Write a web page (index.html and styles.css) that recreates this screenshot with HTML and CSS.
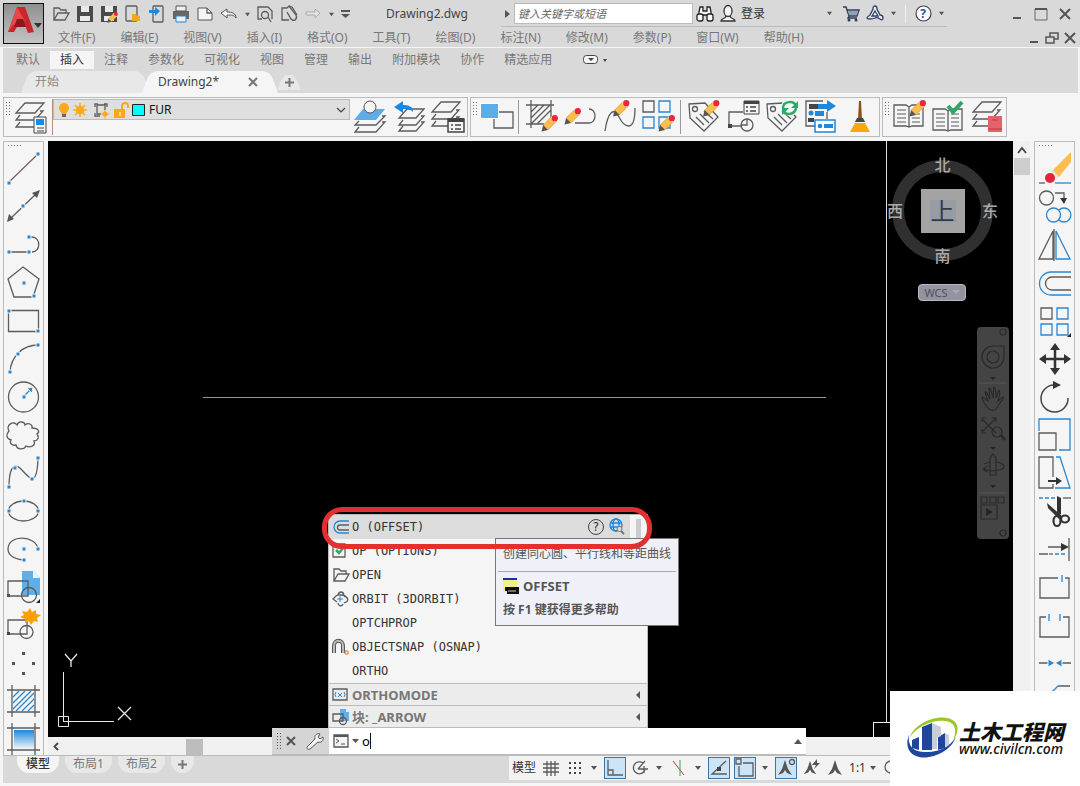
FILE: index.html
```html
<!DOCTYPE html>
<html lang="zh-CN">
<head>
<meta charset="utf-8">
<title>Drawing2.dwg</title>
<link rel="stylesheet" href="styles.css">
</head>
<body>
<svg class="sprite" aria-hidden="true">
  <symbol id="pencil" viewBox="0 0 16 16"><path d="M2 9.500 10 1.500l4.500 4.500-8 8z" fill="#fbbd4c" stroke="#c98a2a" stroke-width=".5"/><path d="M2 9.500l4.500 4.500L.5 15.500z" fill="#555"/><path d="M9 2.500l4.500 4.500 1-1L10 1.500z" fill="#dfe3ea"/><circle cx="13" cy="3" r="2.900" fill="#e8263c"/></symbol>
  <symbol id="layers" viewBox="0 0 34 34"><g class="g"><path d="M11 3h19l-9 10H2z"/><path d="M6 15l-4 5h19l8-9h-3M6 22l-4 5h19l8-9h-3"/></g></symbol>
  <symbol id="tag" viewBox="0 0 34 34"><g class="g"><path d="M2 4l16-1L31 17 17 31 3 18z"/><circle cx="8" cy="9" r="2.500"/><path d="M9 17l8 8M13 14l9 9M17 11l9 8"/></g></symbol>
  <symbol id="book" viewBox="0 0 34 34"><g class="g"><path d="M2 7h12l3 2 3-2h11v21H20l-3 1-3-1H2zM17 9v20"/><path d="M5 12h9M5 16h9M5 20h9M5 24h9M20 12h8M20 16h8M20 20h8M20 24h8" stroke-width="1"/></g></symbol>
  <symbol id="folder" viewBox="0 0 18 16"><path class="g" d="M2 14V2h5l2 2h5v3M2 14L6 7h11l-4 7z"/></symbol>
  <symbol id="caret" viewBox="0 0 8 6"><path d="M1 1h6L4 5z" fill="#555"/></symbol>
  <symbol id="block" viewBox="0 0 34 34"><path d="M15 1h11l7 7v17H15z" fill="#62aee8"/><path d="M26 1v7h7z" fill="#f5f5f5"/><g class="g"><path d="M1 11h20v15H1z"/><circle cx="22" cy="25" r="7.500"/></g><path d="M0 24h3v3H0z" fill="#555"/></symbol>
  <symbol id="compass" viewBox="0 0 18 18"><path d="M9 1l3 9 4 6-5-2-2-3-2 3-5 2 4-6z" fill="#555"/></symbol>
</svg>

<header class="header">
  <button class="app" aria-label="应用程序菜单"><svg width="41" height="40" viewBox="0 0 41 40"><path d="M5 28L14 3h8l9 25-6 1-3-8h-7l-4 7z" fill="#c9252d"/><path d="M14 3l8 14-12 4-5 7z" fill="#e5484b"/><path d="M14 15h6l3 8H11z" fill="#8e171d"/><path d="M31 19h8l-4 5z" fill="#333"/></svg></button>
  <div class="head-rows">
    <div class="title-row">
      <div class="quick">
        <button aria-label="打开"><svg width="18" height="16"><use href="#folder"/></svg></button>
        <button aria-label="保存"><svg width="18" height="18"><path d="M1 1h16v16H1z" fill="#4a4a4a"/><path d="M5 1h8v6H5zM4 11h10v5H4z" fill="#e9e9e9"/></svg></button>
        <button aria-label="另存为"><svg width="18" height="18"><path d="M1 1h16v16H1z" fill="#4a4a4a"/><path d="M5 1h8v6H5zM4 11h10v5H4z" fill="#e9e9e9"/><use href="#pencil" x="7" y="7" width="11" height="11"/></svg></button>
        <button aria-label="从移动设备打开"><svg width="18" height="18"><rect class="g" x="2" y="1" width="11" height="15" rx="1"/><path d="M8 16v-7h4l1 2h3v5z" fill="#f5a623"/></svg></button>
        <button aria-label="保存到移动设备"><svg width="18" height="18"><rect class="g" x="5" y="1" width="10" height="16" rx="1"/><path d="M1 5h6V2l5 4-5 5V8H1z" fill="#1e88dc"/></svg></button>
        <button aria-label="打印"><svg width="18" height="18"><path d="M1 6h16v8H1z" fill="#666"/><path d="M4 1h10v5H4z" fill="#eee" stroke="#555"/><path d="M4 11h10v6H4z" fill="#eee" stroke="#1e88dc"/></svg></button>
        <button aria-label="新建"><svg width="18" height="18"><path d="M2 3h9l5 5v7H2z" fill="#f5f5f5" stroke="#555"/><path class="g" d="M11 3v5h5"/></svg></button>
        <button aria-label="放弃"><svg width="18" height="18"><path d="M1 8l6-4v3c5 0 9 1 9 6-2-3-4-3-9-3v3z" fill="#f5f5f5" stroke="#555"/></svg></button>
        <button class="narrow" aria-label="放弃列表"><svg width="7" height="5"><use href="#caret"/></svg></button>
        <button aria-label="预览"><svg width="18" height="18"><path class="g" d="M6 14H2V2h10l4 4v8"/><circle class="g" cx="9" cy="10" r="3.500"/><path class="g" d="M12 12l3 5"/></svg></button>
        <button aria-label="批处理打印"><svg width="18" height="18"><path class="g" d="M9 15H2V3h5M7 3l2-2 7 9c2 4-2 7-5 4L7 7"/><path class="g" d="M9 1l3 1 5 8"/></svg></button>
        <button aria-label="重做"><svg width="18" height="18"><path d="M16 8l-5-4v3H2v3h9v3z" fill="#e4e4e4" stroke="#aaa"/></svg></button>
        <button class="narrow" aria-label="重做列表"><svg width="7" height="5"><use href="#caret"/></svg></button>
        <button class="more" aria-label="自定义"><svg width="9" height="9"><path d="M0 0h9v2H0zM0 4h9L4.500 8z" fill="#555"/></svg></button>
      </div>
      <h1 class="doc-title">Drawing2.dwg</h1>
      <div class="info">
        <svg class="tri" width="5" height="8"><path d="M0 0l5 4-5 4z" fill="#555"/></svg>
        <input class="search" type="text" placeholder="键入关键字或短语" aria-label="搜索">
        <button aria-label="查找"><svg width="18" height="18"><g fill="#f5f5f5" stroke="#222" stroke-width="1.300"><path d="M3 7l1-5h3v4h4V2h3l1 5v3H3z"/><rect x="1" y="9" width="6" height="7" rx="2"/><rect x="11" y="9" width="6" height="7" rx="2"/></g></svg></button>
        <button class="login"><svg width="18" height="18"><g fill="#f5f5f5" stroke="#333" stroke-width="1.300"><path d="M2 16c0-3 5-2 5-5h4c0 3 5 2 5 5z"/><ellipse cx="9" cy="6" rx="4" ry="5.500"/></g></svg>登录</button>
        <button class="login-more" aria-label="登录菜单"><svg width="7" height="5"><use href="#caret"/></svg></button>
        <button aria-label="购物车"><svg width="18" height="18"><path d="M1 2h3l3 9h8l2-6H5M7 11l-1 2h9" fill="none" stroke="#2d3f55" stroke-width="1.400"/><path d="M6 6h10l-1 4H7z" fill="#8fa0b4"/><circle cx="7" cy="15" r="1.500" fill="#2d3f55"/><circle cx="14" cy="15" r="1.500" fill="#2d3f55"/></svg></button>
        <button aria-label="应用商店"><svg width="18" height="18"><path d="M9 1q2 0 2 3l3 6q3 0 3 3t-3 1-5-1-5 1-3-1 3-3l3-6q0-3 2-3z" fill="#e8edf5" stroke="#2d3f65" stroke-width="1.300"/><path d="M9 6l3 5H6z" fill="#fff" stroke="#2d3f65" stroke-width="1.300"/></svg></button>
        <button class="narrow" aria-label="应用菜单"><svg width="7" height="5"><use href="#caret"/></svg></button>
        <button class="help" aria-label="帮助"><svg width="17" height="17"><circle cx="8.500" cy="8.500" r="7.500" fill="#fff" stroke="#444" stroke-width="1.200"/></svg><span>?</span></button>
        <button class="narrow" aria-label="帮助菜单"><svg width="7" height="5"><use href="#caret"/></svg></button>
      </div>
      <div class="window">
        <button aria-label="最小化"><svg width="14" height="14"><path d="M3 11h8" stroke="#555" stroke-width="2"/></svg></button>
        <button aria-label="最大化"><svg width="14" height="14"><path d="M1 2h12v11H1z" fill="none" stroke="#666"/><path d="M1 2h12" stroke="#555" stroke-width="2"/></svg></button>
        <button aria-label="关闭"><svg width="14" height="14"><path d="M2 2l10 10M12 2L2 12" stroke="#555" stroke-width="2"/></svg></button>
      </div>
    </div>
    <nav class="menu-row">
      <a href="#">文件(F)</a><a href="#">编辑(E)</a><a href="#">视图(V)</a><a href="#">插入(I)</a><a href="#">格式(O)</a><a href="#">工具(T)</a><a href="#">绘图(D)</a><a href="#">标注(N)</a><a href="#">修改(M)</a><a href="#">参数(P)</a><a href="#">窗口(W)</a><a href="#">帮助(H)</a>
      <div class="doc-window">
        <button aria-label="最小化图形"><svg width="12" height="12"><path d="M2 10h8" stroke="#555" stroke-width="2"/></svg></button>
        <button aria-label="还原图形"><svg width="14" height="12"><path d="M1 5h8v6H1zM5 5V1h8v6H9" fill="none" stroke="#555" stroke-width="1.500"/></svg></button>
        <button aria-label="关闭图形"><svg width="12" height="12"><path d="M1 1l10 10M11 1L1 11" stroke="#555" stroke-width="2"/></svg></button>
      </div>
    </nav>
  </div>
</header>

<section class="ribbon">
  <nav class="ribbon-tabs">
    <a href="#">默认</a><a href="#" class="on">插入</a><a href="#">注释</a><a href="#">参数化</a><a href="#">可视化</a><a href="#">视图</a><a href="#">管理</a><a href="#">输出</a><a href="#">附加模块</a><a href="#">协作</a><a href="#">精选应用</a>
    <button class="ribbon-min" aria-label="最小化功能区"><svg width="24" height="10"><rect x=".5" y=".5" width="14" height="8" rx="3" fill="#f5f5f5" stroke="#444"/><path d="M5 3h6L8 6zM20 4h4l-2 3z" fill="#444"/></svg></button>
  </nav>
  <div class="file-tabs">
    <a href="#" class="ftab start">开始</a>
    <div class="ftab active"><a href="#">Drawing2*</a><button aria-label="关闭选项卡"><svg width="10" height="10"><path d="M1 1l8 8M9 1L1 9" stroke="#777" stroke-width="2"/></svg></button></div>
    <button class="ftab add" aria-label="新建选项卡"><svg width="9" height="9"><path d="M4.500 0v9M0 4.500h9" stroke="#777" stroke-width="2"/></svg></button>
  </div>
</section>

<div class="toolbars">
  <div class="bar layers-bar">
    <i class="grip"></i>
    <button class="tool" aria-label="图层特性"><svg width="34" height="34"><use href="#layers"/><path d="M20 17h12v16H20z" fill="#f5f5f5" stroke="#444"/><path d="M22 19h8v6h-8z" fill="#1e88dc"/><path d="M23 28h7M23 31h7" stroke="#444"/></svg></button>
    <div class="layer-cell">
      <div class="layer-box">
        <svg width="92" height="20" viewBox="0 0 92 20"><circle cx="10" cy="8" r="5" fill="#fba81b"/><path d="M7 11h6l-1 4H8z" fill="#fba81b"/><path d="M8 14h4v3H8z" fill="#666"/><circle cx="26" cy="10" r="4" fill="#fba81b"/><path d="M26 3v14M19 10h14M21 5l10 10M31 5L21 15" stroke="#fba81b" stroke-width="1.500"/><path class="g" d="M41 7V4h3M50 4h3v3M41 13v3h5M43 5h8v5M43 5v9h4"/><circle cx="51" cy="14" r="2.500" fill="#fba81b"/><path d="M51 9.500v9M46.500 14h9" stroke="#fba81b"/><path d="M60 9h11v9H60z" fill="#fba81b"/><path d="M68 9V6q0-3 3-3t3 3v2" fill="none" stroke="#fba81b" stroke-width="2"/><path d="M66 12v4" stroke="#fff"/><path d="M78.500 4.500h12v11h-12z" fill="#0ff" stroke="#222"/></svg>
        <select aria-label="图层"><option>FUR</option></select>
        <svg class="chev" width="10" height="6"><path d="M1 1l4 4 4-4" fill="none" stroke="#444" stroke-width="1.200"/></svg>
      </div>
    </div>
    <button class="tool" aria-label="置为当前"><svg width="34" height="34"><g class="g"><path d="M6 21l-4 4h21l9-9h-3M6 27l-4 5h21l9-10h-3"/></g><path d="M10 9h22l-9 11H1z" fill="#5badea"/><circle cx="17" cy="7" r="6" fill="#f5f5f5" stroke="#555"/></svg></button>
    <button class="tool" aria-label="上一个图层"><svg width="34" height="34"><g class="g"><path d="M15 9h17l-8 9H7zM11 20l-4 5h17l8-9h-3M11 26l-4 5h17l8-9h-3"/></g><path d="M2 7l9-6v4c7 0 10 2 10 7-3-3-5-3-10-3v4z" fill="#1e88dc"/></svg></button>
    <button class="tool" aria-label="图层状态"><svg width="34" height="34"><use href="#layers" x="-1" y="-1"/><path d="M17 19h16v13H17z" fill="#f5f5f5" stroke="#444" stroke-width="1.500"/><path d="M17 18h16v4H17z" fill="#444"/><path d="M20 25h2M24 25h6M20 29h2M24 29h6" stroke="#444" stroke-width="1.300"/></svg></button>
  </div>
  <div class="bar">
    <i class="grip"></i>
    <button class="tool" aria-label="绘图次序"><svg width="34" height="34"><path class="g" d="M14 12h19v16H14z"/><path d="M0 3h19v16H0z" fill="#fff"/><path d="M1 4h17v14H1z" fill="#5badea"/></svg></button>
    <i class="sep"></i>
    <button class="tool" aria-label="编辑图案填充"><svg width="34" height="34"><path class="g" d="M6 0v28M26 0v18M1 5h28M1 24h18M6 12l7-7M6 18L19 5M6 24L25 5M12 24l14-14"/><use href="#pencil" x="16" y="15" width="17" height="17"/></svg></button>
    <button class="tool" aria-label="编辑多段线"><svg width="34" height="34"><path class="g" d="M11 23h14c8 0 8-14 0-14"/><use href="#pencil" x="0" y="8" width="17" height="17"/></svg></button>
    <button class="tool" aria-label="编辑样条曲线"><svg width="34" height="34"><path class="g" d="M2 31c3-20 9-24 14-14s16 17 16-9"/><use href="#pencil" x="9" y="0" width="18" height="17"/></svg></button>
    <button class="tool" aria-label="编辑阵列"><svg width="34" height="34"><path class="g" d="M1 1h11v11H1z"/><path class="b" d="M17 1h11v11H17zM1 17h11v11H1zM17 17h11v11H17z"/><use href="#pencil" x="16" y="15" width="17" height="17"/></svg></button>
    <i class="sep"></i>
    <button class="tool" aria-label="编辑属性"><svg width="34" height="34"><use href="#tag"/><use href="#pencil" x="15" y="0" width="18" height="17"/></svg></button>
    <button class="tool" aria-label="块属性管理器"><svg width="34" height="34"><path class="g" d="M17 12H3v14h13"/><path d="M2 24h4v4H2z" fill="#444"/><circle class="g" cx="21" cy="25" r="6"/><path class="g" d="M21 19v6h-6"/><path d="M18 1h15v13H18z" fill="#f5f5f5" stroke="#444"/><path d="M18 1h15v3H18z" fill="#444"/><path d="M20 7h2M24 7h6M20 11h2M24 11h6" stroke="#444" stroke-width="1.300"/></svg></button>
    <button class="tool" aria-label="同步属性"><svg width="34" height="34"><use href="#tag"/><circle cx="25" cy="7" r="9" fill="#f5f5f5"/><path d="M18 8c0-7 11-8 13-2M31 8c-1 7-11 8-13 2" fill="none" stroke="#2fa866" stroke-width="2.500"/><path d="M33 1v7h-7zM17 15V8h7z" fill="#2fa866"/></svg></button>
    <button class="tool" aria-label="提取数据"><svg width="34" height="34"><path class="g" d="M11 26H2V1h17M23 12v7"/><path d="M5 4h9v5H5z" fill="#444"/><path d="M14 4h9V0l9 6-9 6V9h-9z" fill="#1e88dc"/><path d="M11 11h9v5h-9z" fill="#1e88dc"/><circle cx="7" cy="13" r="2.500" fill="#1e88dc"/><path d="M4 18h6v4H4z" fill="#444"/><path d="M11 20h20v12H11z" fill="#fff" stroke="#1e88dc" stroke-width="1.500"/><circle cx="16" cy="26" r="2.300" fill="#1e88dc"/><path d="M20 24h9v4h-9z" fill="#1e88dc"/></svg></button>
    <button class="tool" aria-label="清理"><svg width="34" height="34"><path d="M16 1h2l1 18h-4z" fill="#8b5413"/><path d="M14 18h6l2 4H12z" fill="#444"/><path d="M12 23h10l5 9H7z" fill="#fba60a"/></svg></button>
  </div>
  <div class="bar">
    <i class="grip"></i>
    <button class="tool" aria-label="编辑参照"><svg width="34" height="34"><use href="#book" y="-2"/><use href="#pencil" x="17" y="0" width="17" height="17"/></svg></button>
    <button class="tool" aria-label="保存参照"><svg width="34" height="34"><use href="#book" y="2"/><path d="M17 6l5 6L31 2" fill="none" stroke="#2fa866" stroke-width="4"/></svg></button>
    <button class="tool" aria-label="参照图层"><svg width="34" height="34"><use href="#layers" x="1" y="-1"/><path d="M18 16h14v16H18z" fill="#e4636b"/><path d="M18 29h14M22 20h6" stroke="#b33a44"/></svg></button>
  </div>
</div>

<main class="main">
  <aside class="side">
    <i class="hgrip"></i>
    <button class="tool" aria-label="直线"><svg width="34" height="34"><path d="M2 30L31 2" stroke="#7b5a68" stroke-width="1.200"/><path class="h" d="M0 29h4v4H0zM29 0h4v4h-4z"/></svg></button>
    <button class="tool" aria-label="构造线"><svg width="34" height="34"><path class="g" d="M3 29L30 3"/><path d="M33 0l-3 8-5-5zM0 32l2-8 5 5z" fill="#555"/><path class="h" d="M14 14h4v4h-4z"/></svg></button>
    <button class="tool" aria-label="多段线"><svg width="34" height="34"><path class="g" d="M2 24h20M22 9h3c9 0 9 15 0 15"/><path class="h" d="M0 22h4v4H0zM20 22h4v4h-4zM20 7h4v4h-4z"/></svg></button>
    <button class="tool" aria-label="多边形"><svg width="34" height="34"><path class="g" d="M16 1l16 12-6 18H7L1 13z"/><path class="h" d="M15 15h4v4h-4zM25 28h4v4h-4z"/></svg></button>
    <button class="tool" aria-label="矩形"><svg width="34" height="34"><path class="g" d="M1.500 6.500h30v21h-30z"/><path class="h" d="M0 5h4v4H0zM29 25h4v4h-4z"/></svg></button>
    <button class="tool" aria-label="圆弧"><svg width="34" height="34"><path class="g" d="M3 30C4 14 16 3 31 3"/><path class="h" d="M1 28h4v4H1zM9 10h4v4H9zM29 1h4v4h-4z"/></svg></button>
    <button class="tool" aria-label="圆"><svg width="34" height="34"><circle class="g" cx="16.500" cy="17" r="15"/><path class="b" d="M17 16l7-7"/><path class="h" d="M15 15h4v4h-4zM26 7l-1 6-5-5z"/></svg></button>
    <button class="tool" aria-label="修订云线"><svg width="34" height="34"><path class="g" d="M2 13c-4-6 5-11 8-6 2-5 8-3 8 0 4-3 8 0 7 3 7 0 8 4 5 6 3 4 0 7-3 7 2 5-4 7-8 5-2 4-9 4-10-1-4 1-7-2-5-5-5-1-5-6-2-9z"/></svg></button>
    <button class="tool" aria-label="样条曲线"><svg width="34" height="34"><path class="g" d="M2 31C2 12 7 6 14 13s16 22 17-11"/><path class="h" d="M0 29h4v4H0zM6 10h4v4H6zM23 21h4v4h-4zM29 0h4v4h-4z"/></svg></button>
    <button class="tool" aria-label="椭圆"><svg width="34" height="34"><ellipse class="g" cx="16.500" cy="17" rx="15" ry="10"/><path class="h" d="M15 5h4v4h-4zM0 15h4v4H0zM29 15h4v4h-4z"/></svg></button>
    <button class="tool" aria-label="椭圆弧"><svg width="34" height="34"><path class="g" d="M31 17C29 3 1 2 1 17c0 7 8 10 15 11"/><path class="h" d="M15 15h4v4h-4zM29 15h4v4h-4zM15 26h4v4h-4z"/></svg></button>
    <button class="tool" aria-label="插入块"><svg width="34" height="34"><use href="#block"/><path d="M33 29v4h-4z" fill="#222"/></svg></button>
    <button class="tool" aria-label="创建块"><svg width="34" height="34"><g class="g"><path d="M1 12h19v14H1z"/><circle cx="19.500" cy="24" r="6.500"/></g><path d="M0 24h3v3H0z" fill="#444"/><path d="M23 0l2 4 4-2v4l5 1-4 3 1 4-4-1-3 4-2-4-4 2v-4l-5-2 4-2-2-4 5 1z" fill="#fba000"/></svg></button>
    <button class="tool" aria-label="多点"><svg width="34" height="34"><path d="M15 6h3v3h-3zM5 16h3v3H5zM25 16h3v3h-3zM15 26h3v3h-3z" fill="#555"/></svg></button>
    <button class="tool" aria-label="图案填充"><svg width="34" height="34"><path class="g" d="M5 1v32M28 1v32M0 6h33M0 28h33"/><path class="b" d="M6 13l6-6M6 19L18 7M6 25L24 7M9 27L27 9M15 27l12-12M21 27l6-6"/></svg></button>
    <button class="tool" aria-label="渐变色"><svg width="34" height="34"><defs><linearGradient id="fade" x2="0" y2="1"><stop stop-color="#1e88dc"/><stop offset="1" stop-color="#f2f7fb"/></linearGradient></defs><path class="g" d="M5 1v32M28 1v32M0 6h33M0 28h33"/><path d="M7 8h20v19H7z" fill="url(#fade)"/></svg></button>
  </aside>

  <section class="viewport">
    <div class="canvas">
      <i class="cyan-line"></i>
      <i class="cross-line"></i>
      <i class="pick-box"></i>
      <svg class="ucs" width="80" height="80" viewBox="0 0 80 80"><g fill="none" stroke="#e8e8e8"><path d="M5.500 22v50M5.500 71.500H56M.5 66.500h10v10H.5z"/><path d="M7 4l6 7 6-7M13 11v6M60 57l13 13M73 57L60 70" stroke-width="1.300"/></g></svg>
      <div class="cube">
        <span class="n">北</span><span class="w">西</span><span class="face">上</span><span class="e">东</span><span class="s">南</span>
      </div>
      <button class="wcs">WCS <svg width="8" height="5"><path d="M0 0h8L4 4z" fill="#a8a8b4"/></svg></button>
      <div class="navbar">
        <svg width="32" height="212" viewBox="0 0 32 212"><g fill="none" stroke="#2a2a2a" stroke-width="1.200"><circle cx="26" cy="5" r="3"/><circle cx="26" cy="206" r="3"/><path d="M16 19h11v11a11 11 0 1 1-11-11z"/><circle cx="16" cy="30" r="6"/><path d="M10 80c-3-4-5-8-5-10 2 0 4 3 6 4l-3-9c2-1 3 4 5 7l-1-11c2-1 3 6 4 10l1-11c2 0 2 7 2 11l3-8c2 1 0 7-1 11l5-4c2 1-4 6-5 9-2 5-7 6-11 1z"/><path d="M5 92l14 14M18 92L5 105M5 95v-4h4M15 91h4v4M5 102v4h4"/><circle cx="20" cy="105" r="5"/><path d="M24 108l4 5" stroke-width="2.500"/><path d="M13 148v-17l3-4 3 4v17zM19 135c8 1 10 5 6 7-5 2-13 2-19 0M13 135l-6 2M6 142l5-3M6 142l4 3"/><path d="M4 170h6v6H4zM13 170h6v6h-6zM21 170h6v6h-6zM4 178h16v14H4z"/></g><path d="M13 50h6l-3 3zM13 120h6l-3 3zM13 158h6l-3 3zM9 181l7 4-7 4z" fill="#252525"/><path d="M2 56h28M2 166h28" stroke="#555"/></svg>
      </div>
    </div>
    <div class="hscroll">
      <svg width="6" height="9"><path d="M5 1L1.500 4.500 5 8" fill="none" stroke="#444" stroke-width="1.800"/></svg>
      <i></i>
    </div>

    <div class="suggest">
      <ul>
        <li class="sel"><svg width="18" height="16"><path d="M17 2H8a6 6 0 0 0 0 12h9" fill="none" stroke="#1e88dc" stroke-width="1.300"/><path class="g" d="M17 6H8a2 2 0 0 0 0 5h9"/></svg><span>O (OFFSET)</span>
          <em class="q">?</em>
          <svg width="16" height="18"><g fill="none" stroke="#1e88dc" stroke-width="1.400"><circle cx="7" cy="7" r="6"/><ellipse cx="7" cy="7" rx="3" ry="6"/><path d="M1 5h12M1 9h9"/></g><circle cx="10.500" cy="11" r="2.500" fill="#ddd" stroke="#777"/><path d="M12 13l3 3" stroke="#777" stroke-width="2"/></svg>
          <i class="thumb"></i></li>
        <li><svg width="18" height="16"><path class="g" d="M1 1h12v13H1z"/><path d="M4 7l3 3 5-6" fill="none" stroke="#2fa866" stroke-width="2.500"/></svg><span>OP (OPTIONS)</span></li>
        <li><svg width="18" height="16"><use href="#folder"/></svg><span>OPEN</span></li>
        <li><svg width="18" height="16"><path class="g" d="M4 5L1 8l4 3M12 12c6-2 4-6 0-7M6 4c1-4 5-4 6 0M6 12c0 3 4 4 5 1M4 5c2-2 9-1 10 1" stroke-width="1.500"/><path d="M8 5v6M5 8h6" stroke="#1e88dc"/></svg><span>ORBIT (3DORBIT)</span></li>
        <li><svg width="18" height="16"></svg><span>OPTCHPROP</span></li>
        <li><svg width="18" height="16"><path d="M2 14V7c0-7 9-7 9 0v7" fill="none" stroke="#555" stroke-width="4"/><path d="M2 14V7c0-7 9-7 9 0v7" fill="none" stroke="#bbb" stroke-width="2"/><path d="M13 12h3v3h-3z" fill="none" stroke="#e0792a"/></svg><span>OBJECTSNAP (OSNAP)</span></li>
        <li><svg width="18" height="16"></svg><span>ORTHO</span></li>
      </ul>
      <button class="group"><svg width="18" height="14"><path class="g" d="M1 1h14v11H1z"/><path d="M4 4L3 6.500 4 9M12 4l1 2.500L12 9M6 5l4 4M10 5L6 9" fill="none" stroke="#1e88dc"/></svg><span>ORTHOMODE</span><svg width="4" height="8"><path d="M4 0v8L0 4z" fill="#555"/></svg></button>
      <button class="group"><svg width="18" height="18" viewBox="0 0 18 18"><path d="M8 1h6l3 3v9H8z" fill="#62aee8"/><path d="M14 1v3h3z" fill="#f5f5f5"/><path class="g" d="M1 6h10v7H1z"/><circle class="g" cx="11" cy="13" r="3.500"/></svg><span>块: _ARROW</span><svg width="4" height="8"><path d="M4 0v8L0 4z" fill="#555"/></svg></button>
    </div>
    <div class="tip" role="tooltip">
      <p>创建同心圆、平行线和等距曲线</p>
      <div>
        <b class="cmd"><svg width="16" height="16"><path d="M0 0h14v14H0z" fill="#f6f08a"/><path d="M0 0h14v2H0z" fill="#1a2fb0"/><path d="M2 9h14v7H4V13H2z" fill="#111"/><path d="M5 13h8" stroke="#ccc"/></svg>OFFSET</b>
        <b>按 F1 键获得更多帮助</b>
      </div>
    </div>
    <div class="ring"></div>
    <div class="command">
      <i class="cgrip"></i>
      <button aria-label="关闭命令行"><svg width="10" height="10"><path d="M1 1l8 8M9 1L1 9" stroke="#555" stroke-width="2"/></svg></button>
      <button class="wrench" aria-label="自定义"><svg width="18" height="18"><path d="M1 15l8-8c-1-4 2-6 5-5l-2 3 2 2 3-2c1 4-2 6-5 5l-8 7c-2 1-4-1-3-2z" fill="#f5f5f5" stroke="#555"/></svg></button>
      <label class="entry">
        <svg width="26" height="14"><path d="M1 1h14v12H1z" fill="#f5f5f5" stroke="#555" stroke-width="1.300"/><path d="M1 2h14" stroke="#555" stroke-width="2"/><path d="M3 5l3 2-3 2M8 10h4" fill="none" stroke="#555"/><path d="M19 5h7l-3.500 4z" fill="#555"/></svg>
        <input type="text" value="o" aria-label="命令"><i class="text-cursor"></i>
        <svg width="8" height="5"><path d="M0 5l4-5 4 5z" fill="#555"/></svg>
      </label>
    </div>
  </section>

  <div class="vscroll"><svg width="10" height="8"><path d="M1 7l4-5 4 5" fill="none" stroke="#444" stroke-width="1.800"/></svg><i></i></div>

  <aside class="side right">
    <i class="hgrip"></i>
    <button class="tool" aria-label="删除"><svg width="34" height="34"><path d="M14 19L33 0v10L21 25z" fill="#fbbd4c"/><path d="M12 21l3-3 6 7-3 2z" fill="#e9e4de"/><circle cx="12" cy="26" r="5" fill="#e32636"/><path class="g" d="M1 31h6"/><path class="b" d="M17 31h16"/></svg></button>
    <button class="tool" aria-label="复制"><svg width="34" height="34"><circle class="g" cx="8.500" cy="8" r="7"/><path class="g" d="M17 3h9v6"/><path d="M22 8h7l-3 6z" fill="#333"/><circle class="b" cx="15.500" cy="25" r="7"/><path class="b" d="M21 20a7 7 0 1 1 0 10"/></svg></button>
    <button class="tool" aria-label="镜像"><svg width="34" height="34"><path class="g" d="M15 3v28H1zM16 1v32"/><path class="b" d="M18 3v28h14z"/></svg></button>
    <button class="tool" aria-label="偏移"><svg width="34" height="34"><path class="b" d="M33 6H13a11 11 0 0 0 0 23h20"/><path class="g" d="M33 11H14a6 6 0 0 0 0 13h19"/></svg></button>
    <button class="tool" aria-label="阵列"><svg width="34" height="34"><path class="g" d="M3 4h11v11H3z"/><path class="b" d="M19 4h11v11H19zM3 20h11v11H3zM19 20h11v11H19z"/><path d="M33 29v4h-4z" fill="#222"/></svg></button>
    <button class="tool" aria-label="移动"><svg width="34" height="34"><path d="M17 5v24M5 17h24" stroke="#333" stroke-width="2.500"/><path d="M17 1l5 7H12zM17 33l5-7H12zM1 17l7-5v10zM33 17l-7-5v10z" fill="#333"/></svg></button>
    <button class="tool" aria-label="旋转"><svg width="34" height="34"><path d="M30 18a13.500 13.500 0 1 1-14-13" fill="none" stroke="#444" stroke-width="1.500"/><path d="M15 1l8 4-8 4z" fill="#333"/></svg></button>
    <button class="tool" aria-label="缩放"><svg width="34" height="34"><path class="b" d="M1 13V1h31v31H21"/><path class="g" d="M1 15h17v17H1z"/></svg></button>
    <button class="tool" aria-label="拉伸"><svg width="34" height="34"><path class="g" d="M15 21V1H1v31h14v-4"/><path class="b" d="M18 1h4l10 31H17"/><path d="M10 24h8v-3l6 4-6 4v-3h-8z" fill="#333"/></svg></button>
    <button class="tool" aria-label="修剪"><svg width="34" height="34"><path class="b" d="M1 4h16" stroke-dasharray="4 2"/><path class="g" d="M25 4h8"/><path d="M19 2l4 2v16l-4 2zM9 9l16 14-4 2L10 14z" fill="#333"/><ellipse cx="19" cy="27" rx="3.500" ry="5" fill="none" stroke="#333" stroke-width="2.200"/><ellipse cx="27" cy="25" rx="4" ry="3.500" fill="none" stroke="#333" stroke-width="2.200"/></svg></button>
    <button class="tool" aria-label="延伸"><svg width="34" height="34"><path class="g" d="M31 6v23M1 22h9M10 15h14"/><path class="b" d="M11 22h18" stroke-dasharray="4 2"/><path d="M23 11l8 4-8 4z" fill="#333"/></svg></button>
    <button class="tool" aria-label="打断于点"><svg width="34" height="34"><path class="g" d="M20 8H2v20h29V8h-4"/><path class="b" d="M24 5v7"/></svg></button>
    <button class="tool" aria-label="打断"><svg width="34" height="34"><path class="g" d="M8 9H2v20h29V9h-6"/><path class="b" d="M11 6v7M22 6v7"/></svg></button>
    <button class="tool" aria-label="合并"><svg width="34" height="34"><path class="g" d="M1 17h10M23 17h10"/><path class="h" d="M10 13l7 4-7 4zM24 13l-7 4 7 4z"/></svg></button>
    <button class="tool" aria-label="倒角"><svg width="34" height="34"><path class="g" d="M20 2h12M2 32V20"/><path class="b" d="M2 20L20 2"/></svg></button>
    <button class="tool" aria-label="圆角"><svg width="34" height="34"><path class="g" d="M20 2h12M2 32V20"/><path class="b" d="M2 20C2 8 10 2 20 2"/></svg></button>
  </aside>
</main>

<footer class="footer">
  <nav class="layouts">
    <a href="#" class="on">模型</a><a href="#">布局1</a><a href="#">布局2</a><button aria-label="新建布局"><svg width="9" height="9"><path d="M4.500 0v9M0 4.500h9" stroke="#777" stroke-width="2"/></svg></button>
  </nav>
  <div class="status">
    <button class="model">模型</button>
    <button aria-label="栅格"><svg width="18" height="18"><path class="g" d="M5 2v15M9 2v15M13 2v15M1 5h16M1 9h16M1 13h16"/></svg></button>
    <button aria-label="捕捉"><svg width="18" height="18"><path d="M3 4h14M3 9h14M3 14h14" stroke="#444" stroke-width="2" stroke-dasharray="2 3"/></svg></button>
    <button class="narrow" aria-label="捕捉设置"><svg width="8" height="6"><use href="#caret"/></svg></button>
    <button class="blue" aria-label="正交"><svg width="20" height="20"><path class="g" d="M3 2v15h15M3 12h5v5"/></svg></button>
    <button aria-label="极轴"><svg width="18" height="18"><path class="g" d="M12 4a6 6 0 1 0 2 7M7 10l7-8M7 10h10M13 7v7"/></svg></button>
    <button class="narrow" aria-label="极轴设置"><svg width="8" height="6"><use href="#caret"/></svg></button>
    <button aria-label="等轴测"><svg width="18" height="18"><path d="M3 2l11 14" stroke="#b33"/><path d="M10 1v16" stroke="#2fa866"/></svg></button>
    <button class="narrow" aria-label="等轴测设置"><svg width="8" height="6"><use href="#caret"/></svg></button>
    <button class="blue" aria-label="对象追踪"><svg width="20" height="20"><path class="g" d="M17 3L3 16h15"/><path d="M8 9h4v4H8z" fill="#444"/></svg></button>
    <button class="blue" aria-label="对象捕捉"><svg width="20" height="20"><path class="g" d="M1 1h5v5H1zM8 5h10v13H4V8"/></svg></button>
    <button class="narrow" aria-label="捕捉菜单"><svg width="8" height="6"><use href="#caret"/></svg></button>
    <button class="blue" aria-label="注释可见"><svg width="20" height="20"><use href="#compass" width="18" height="20"/><circle class="g" cx="16" cy="4" r="2.500"/></svg></button>
    <button aria-label="自动缩放"><svg width="18" height="18"><use href="#compass" width="16" height="18"/><path d="M15 0l-5 6h4l-2 4 6-6h-3z" fill="#555"/></svg></button>
    <button aria-label="注释比例"><svg width="18" height="18"><use href="#compass" width="18" height="18"/></svg></button>
    <button class="scale">1:1<svg width="8" height="6"><use href="#caret"/></svg></button>
    <button aria-label="设置"><svg width="18" height="18"><circle class="g" cx="9" cy="8" r="6"/><circle class="g" cx="13" cy="10" r="4" stroke-dasharray="2 1"/></svg></button>
  </div>
</footer>

<aside class="brand">
  <svg width="52" height="46" viewBox="0 0 52 46"><path d="M3 21C8 6 35-4 47 5c7 6 2 16-1 20C50 15 49 6 38 5 24 3 9 12 3 21z" fill="#99c62b"/><path d="M2 19c-6 15 5 25 20 22 13-2 24-11 27-20-6 10-18 15-28 15C8 37 0 31 2 19z" fill="#1e479b"/><path d="M5 24l7-3v13l-7-2zM15 11l10-4v27H15zM31 21l7-4v15l-7 2z" fill="#1e479b"/><path d="M25 7l9 4v9l-4 2v11h-5zM38 17l4 2v10l-4 2z" fill="#c9ced8"/></svg>
  <div><strong>土木工程网</strong><span>www.civilcn.com</span></div>
</aside>
</body>
</html>
```
FILE: styles.css
```css
* { box-sizing: border-box; }
body {
  margin: 0;
  height: 100vh;
  display: flex;
  flex-direction: column;
  position: relative;
  overflow: hidden;
  background: #f5f5f5;
  color: #666;
  font: 12px/16px "Noto Sans", "Noto Sans CJK SC", sans-serif;
}
a { color: inherit; text-decoration: none; }
button {
  display: flex;
  align-items: center;
  justify-content: center;
  padding: 0;
  border: 0;
  background: none;
  color: inherit;
  font: inherit;
}
svg { flex: none; display: block; overflow: visible; }
.sprite { position: absolute; width: 0; height: 0; }
.g { fill: none; stroke: #5c5c5c; stroke-width: 1.3; }
.b { fill: none; stroke: #2b87cf; stroke-width: 1.3; }
.h { fill: #2b87cf; stroke: #f5f5f5; stroke-width: 1; }

/* Header */
.header { display: flex; height: 47px; flex: none; background: #d9d9d9; padding-left: 3px; }
.app {
  width: 41px; height: 41px; margin-top: 3px;
  border: 1px solid #111;
  background: linear-gradient(#8f8f8f, #c4c4c4);
}
.head-rows { flex: 1; display: flex; flex-direction: column; padding-left: 5px; }
.title-row { display: flex; align-items: center; height: 28px; }
.quick, .info, .window, .doc-window { display: flex; align-items: center; }
.quick button, .info button, .window button { width: 24px; height: 24px; }
.quick .narrow, .info .narrow { width: 12px; }
.quick .more { width: 16px; }
.doc-title { flex: 1; margin: 0; text-align: center; font-size: 12px; font-weight: 400; line-height: 18px; color: #444; }
.info { border-bottom: 1px solid #bbb; padding-left: 4px; height: 26px; width: 446px; margin-right: 58px; }
.search {
  width: 179px; height: 21px; margin-left: 4px;
  padding: 0 3px;
  border: 1px solid #bbb;
  background: #fff;
  font: italic 11px/16px "Noto Sans", "Noto Sans CJK SC", sans-serif;
}
.search::placeholder { color: #666; opacity: 1; }
.info .login { width: 50px; gap: 4px; color: #333; }
.info .login-more { width: 12px; margin: 0 4px 0 56px; }
.info .help { position: relative; margin-left: 12px; width: 24px; }
.info .help::before { content: ""; position: absolute; left: -6px; height: 18px; border-left: 1px solid #f0f0f0; }
.help span { position: absolute; color: #2456a6; font-weight: 700; }
.window { margin-left: auto; padding-right: 3px; }
.menu-row { display: flex; align-items: center; gap: 25px; height: 19px; padding-left: 9px; color: #777; }
.doc-window { margin-left: auto; gap: 5px; padding-right: 4px; }

/* Ribbon */
.ribbon { flex: none; height: 45px; margin: 1px 2px 0 3px; background: #d9d9d9; }
.ribbon-tabs { display: flex; align-items: center; height: 23px; padding: 1px 0 0 3px; color: #777; }
.ribbon-tabs a { padding: 0 10px; line-height: 18px; }
.ribbon-tabs .on { background: #f5f5f5; color: #333; }
.ribbon-min { margin-left: 21px; }
.file-tabs { display: flex; align-items: flex-end; height: 22px; padding-left: 22px; }
.ftab { position: relative; z-index: 0; display: flex; align-items: center; height: 22px; font-size: 12px; }
.ftab::before, .ftab::after {
  content: ""; position: absolute; z-index: -1; top: 0; bottom: 0; width: 60%; background: #e8e8e8;
}
.ftab::before { left: 0; transform: skewX(-20deg); border-radius: 8px 0 0 0; }
.ftab::after { right: 0; transform: skewX(20deg); border-radius: 0 8px 0 0; }
.start { width: 121px; padding-left: 10px; color: #888; }
.active { width: 128px; padding: 0 16px 0 12px; justify-content: space-between; color: #444; z-index: 1; }
.active::before, .active::after { background: #f5f5f5; }
.add { width: 18px; height: 15px; margin: 0 0 3px 6px; }

/* Toolbars */
.toolbars { flex: none; display: flex; gap: 2px; height: 48px; padding: 4px 3px; }
.bar { display: flex; align-items: center; height: 40px; border: 1px solid #bbb; }
.tool { width: 39px; height: 38px; flex: none; }
.grip { width: 5px; height: 15px; margin: 3px 0 0 1px; align-self: flex-start; flex: none; background: radial-gradient(#777 35%, transparent 40%) 0 0 / 3px 3px; }
.layers-bar .tool:first-of-type { width: 42px; }
.sep { width: 2px; height: 34px; margin: 0 2px; background: #999; border-right: 1px solid #f5f5f5; }
.layer-cell { height: 36px; width: 298px; border-left: 1px solid #b09080; }
.layer-box { display: flex; align-items: center; height: 21px; padding-right: 3px; border: 1px solid #bbb; background: #dfdfdf; }
.layer-box select { flex: 1; height: 19px; padding: 0 3px; border: 0; background: none; appearance: none; color: #111; font: inherit; }

/* Work area */
.main { flex: 1; min-height: 0; display: flex; padding: 0 5px 0 3px; }
.side { width: 41px; flex: none; border: 1px solid #bbb; border-bottom: 0; overflow: hidden; }
.hgrip { display: block; height: 4px; width: 14px; margin: 2px 0 2px 3px; background: radial-gradient(#777 35%, transparent 40%) 0 0 / 3px 3px; }
.side .tool { display: flex; }
.viewport { flex: 1; min-width: 0; position: relative; display: flex; flex-direction: column; margin-left: 4px; }
.canvas { flex: 1; position: relative; overflow: hidden; background: #000; border-bottom: 1px solid #eee; }
.cyan-line { position: absolute; left: 155px; top: 256px; width: 623px; height: 1px; background: #1cc; }
.cross-line { position: absolute; left: 838px; top: 0; bottom: 15px; width: 1px; background: #ddd; }
.pick-box { position: absolute; left: 825px; bottom: 0; width: 26px; height: 15px; border: 1px solid #eee; border-bottom: 0; }
.ucs { position: absolute; left: 10px; top: 509px; }
.cube {
  position: absolute; right: 20px; top: 19px;
  width: 101px; height: 101px;
  display: grid; place-items: center;
  border: 12px solid #303030; border-radius: 50%;
  color: #aaa; font-size: 16px; line-height: 20px; font-weight: 500;
}
.cube span { position: absolute; }
.cube .n { top: -17px; }
.cube .s { bottom: -17px; }
.cube .w { left: -17px; }
.cube .e { right: -17px; }
.cube .face { display: grid; place-items: center; width: 44px; height: 44px; background: linear-gradient(#979ba3, #979ba3) center / 26px 22px no-repeat #a3a3a3; color: #333a44; font-size: 24px; line-height: 36px; font-weight: 400; }
.wcs { position: absolute; right: 47px; top: 143px; width: 48px; height: 17px; gap: 4px; border: 1px solid #b8b8c0; border-radius: 4px; background: #9494a0; color: #50505c; font-size: 11px; }
.navbar { position: absolute; right: 4px; top: 186px; width: 32px; height: 212px; border-radius: 4px; background: #444; }
.hscroll { display: flex; align-items: center; height: 17px; padding-left: 5px; background: #f0f0f0; }
.hscroll i { width: 17px; height: 16px; margin-left: 127px; background: #bdbdbd; }
.vscroll { width: 17px; flex: none; margin-right: 4px; background: #f0f0f0; display: flex; flex-direction: column; align-items: center; padding-top: 5px; gap: 4px; }
.vscroll i { width: 16px; height: 17px; background: #cdcdcd; }

/* Command suggestions */
.suggest { position: absolute; left: 280px; bottom: 27px; width: 320px; border: 1px solid #bbb; background: #f5f5f5; color: #333; }
.suggest ul { margin: 0; padding: 0; list-style: none; font: 12px/24px "DejaVu Sans Mono", monospace; }
.suggest li { display: flex; align-items: center; gap: 2px; height: 24px; padding-left: 3px; }
.suggest .sel { background: #dcdcdc; }
.sel span { flex: 1; }
.q { width: 16px; height: 16px; margin-right: 3px; border: 1px solid #444; border-radius: 50%; text-align: center; font: 12px/14px "DejaVu Sans", sans-serif; }
.thumb { width: 17px; height: 24px; margin-left: 3px; border: solid #f5f5f5; border-width: 4px 6px 0; background: #ccc; }
.group { width: 100%; height: 22px; padding: 0 7px 0 3px; gap: 2px; justify-content: flex-start; border-top: 1px solid #bbb; background: #ececec; color: #777; font-size: 13px; font-weight: 700; line-height: 20px; }
.group span { flex: 1; text-align: left; }
.tip { position: absolute; left: 447px; bottom: 129px; width: 184px; height: 88px; border: 1px solid #777; background: #f0f1f8; color: #555; }
.tip p { margin: 0 2px; padding: 7px 5px 9px; border-bottom: 1px solid #aaa; white-space: nowrap; }
.tip div { display: flex; flex-direction: column; gap: 8px; padding: 6px 7px; }
.tip .cmd { display: flex; gap: 4px; font-size: 13px; }
.ring { position: absolute; left: 274px; bottom: 206px; width: 330px; height: 42px; border: 5px solid #e23030; border-radius: 20px; pointer-events: none; }
.command { position: absolute; left: 224px; bottom: 0; width: 534px; height: 27px; display: flex; align-items: center; background: #d5d5d5; border-bottom: 1px solid #bbb; }
.cgrip { width: 6px; height: 18px; margin: 0 4px; background: radial-gradient(#555 40%, transparent 45%) 0 0 / 3px 3px; }
.wrench { margin: 0 5px 0 10px; }
.entry { flex: 1; height: 26px; display: flex; align-items: center; padding: 0 4px; background: #fff; }
.entry input { width: 8px; margin-left: 3px; padding: 0; border: 0; outline: 0; font: 13px/20px "Noto Sans", sans-serif; }
.text-cursor { width: 1px; height: 16px; margin-right: auto; background: #111; }

/* Footer */
.footer { flex: none; display: flex; justify-content: space-between; height: 28px; margin: 0 3px 3px; border-top: 1px solid #bbb; background: #d9d9d9; }
.layouts { display: flex; gap: 6px; padding-left: 14px; color: #777; }
.layouts a, .layouts button { height: 17px; padding: 0 8px; border-radius: 0 0 12px 12px; background: #e8e8e8; }
.layouts .on { padding: 0 9px; background: #f5f5f5; color: #333; font-weight: 500; }
.layouts button { width: 23px; padding: 0; }
.status { display: flex; align-items: center; height: 24px; margin-right: 174px; background: #f3f3f3; color: #333; }
.status button { width: 24px; height: 22px; }
.status .narrow { width: 14px; margin-right: 1px; }
.status .model { width: 30px; }
.status .blue { width: 22px; margin: 0 2px; border: 1px solid #3b75a8; background: #cce4f8; }
.status .scale { width: 32px; gap: 3px; }

/* Site mark */
.brand { position: absolute; right: 0; bottom: 0; width: 190px; height: 95px; display: flex; align-items: center; padding-left: 17px; background: #fff; color: #111; }
.brand div { display: flex; flex-direction: column; }
.brand strong { font-family: "Noto Sans CJK SC", sans-serif; font-size: 21px; line-height: 20px; font-weight: 900; font-style: italic; }
.brand span { font-size: 14px; line-height: 16px; font-style: italic; font-weight: 500; }
```
